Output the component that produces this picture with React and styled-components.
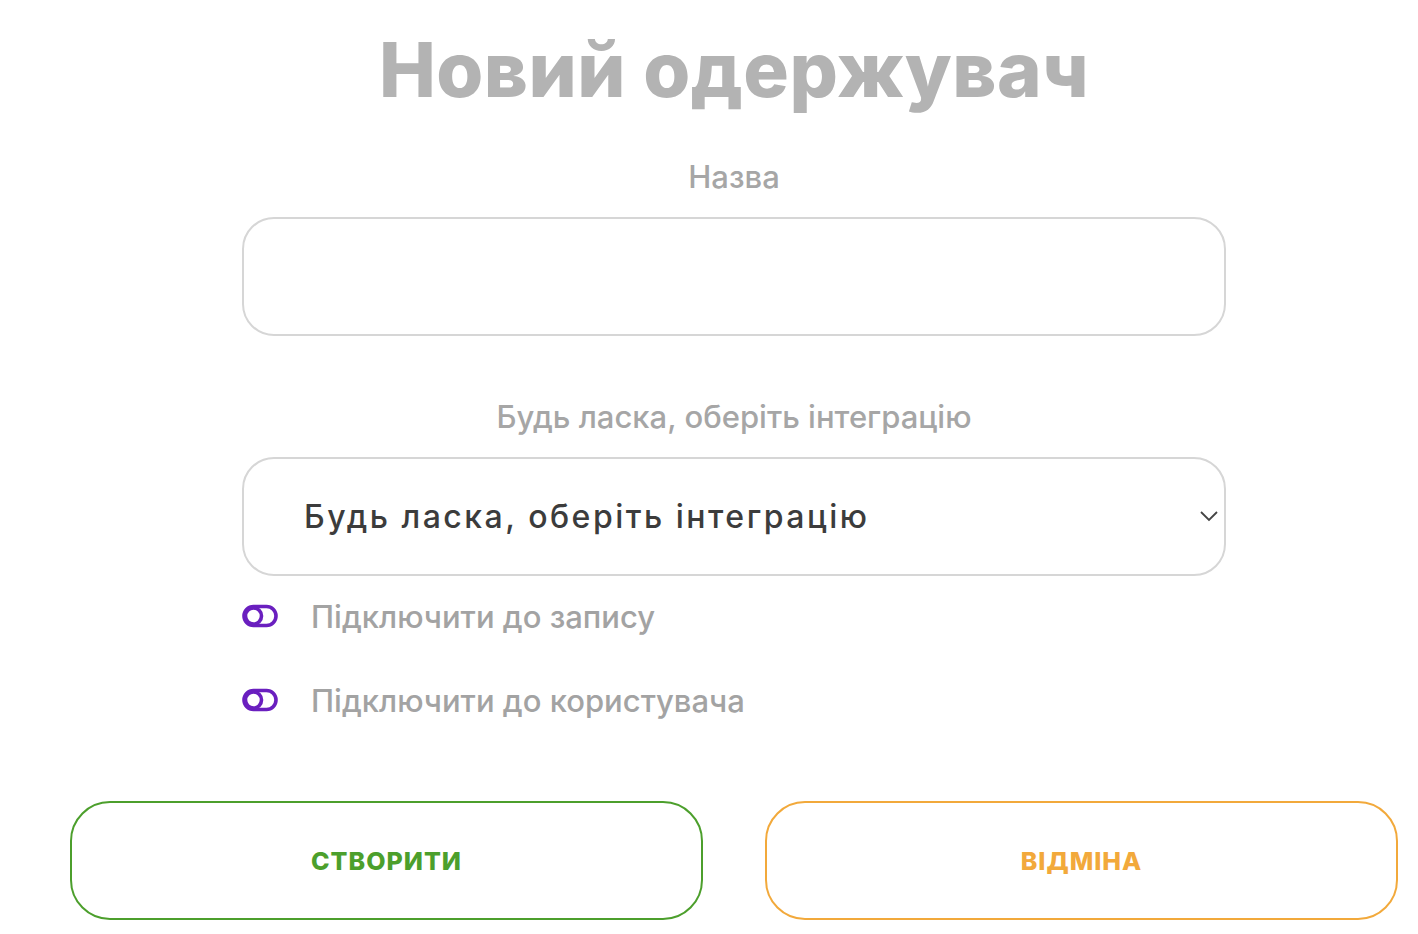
import React from "react";
import styled, { createGlobalStyle } from "styled-components";

const GlobalStyle = createGlobalStyle`
  body {
    margin: 0;
    background: #fff;
    font-family: Inter, "Noto Sans", sans-serif;
  }
`;

const Page = styled.div`
  width: 1328px;
  margin-left: 70px;
  display: flex;
  flex-direction: column;
  align-items: center;
`;

const Title = styled.h1`
  margin: 31px 0 0;
  font-size: 76px;
  line-height: 1;
  font-weight: 800;
  color: #b3b3b3;
  letter-spacing: 0.5px;
`;

const Form = styled.form`
  width: 984px;
  display: flex;
  flex-direction: column;
  margin-top: 53px;
`;

const Label = styled.label`
  align-self: center;
  font-size: 31px;
  line-height: 34px;
  font-weight: 500;
  color: #a6a6a6;
  margin-top: ${(p) => (p.first ? "0" : "64px")};
`;

const fieldBox = `
  box-sizing: border-box;
  width: 100%;
  height: 119px;
  margin-top: 23px;
  border: 2px solid #d6d6d6;
  border-radius: 32px;
  background: #fff;
  outline: none;
`;

const Input = styled.input`
  ${fieldBox}
  padding: 0 60px;
  font-family: Inter, "Noto Sans", sans-serif;
  font-size: 30px;
`;

const SelectWrap = styled.div`
  position: relative;
`;

const Select = styled.select`
  ${fieldBox}
  appearance: none;
  padding: 0 60px;
  font-family: Inter, "Noto Sans", sans-serif;
  font-size: 32px;
  font-weight: 500;
  color: #3c3c3c;
  letter-spacing: 2.5px;
`;

const Chevron = styled.svg`
  position: absolute;
  right: 7px;
  top: 50%;
  margin-top: 11px;
  transform: translateY(-50%);
  pointer-events: none;
`;

const ToggleRow = styled.label`
  display: flex;
  align-items: center;
  gap: 33px;
  height: 36px;
  margin-top: ${(p) => (p.first ? "22px" : "48px")};
  font-size: 31px;
  font-weight: 500;
  color: #a3a3a3;
  cursor: pointer;
`;

const Buttons = styled.div`
  width: 100%;
  display: flex;
  gap: 62px;
  margin-top: 83px;
`;

const Button = styled.button`
  flex: 1;
  height: 119px;
  border: 2px solid ${(p) => p.color};
  border-radius: 40px;
  background: #fff;
  color: ${(p) => p.color};
  font-family: Inter, "Noto Sans", sans-serif;
  font-size: 25px;
  font-weight: 800;
  text-transform: uppercase;
  letter-spacing: 1px;
  cursor: pointer;
`;

const ToggleIcon = () => (
  <svg width="36" height="24" viewBox="0 0 36 24">
    <rect x="2" y="2.5" width="32" height="19" rx="9.5" fill="none" stroke="#6a1fbf" strokeWidth="3.6" />
    <circle cx="11.5" cy="12" r="8" fill="none" stroke="#6a1fbf" strokeWidth="3.6" />
  </svg>
);

export default function App() {
  return (
    <>
      <GlobalStyle />
      <Page>
        <Title>Новий одержувач</Title>
        <Form onSubmit={(e) => e.preventDefault()}>
          <Label first htmlFor="name">Назва</Label>
          <Input id="name" name="name" />
          <Label htmlFor="integration">Будь ласка, оберіть інтеграцію</Label>
          <SelectWrap>
            <Select id="integration" defaultValue="">
              <option value="">Будь ласка, оберіть інтеграцію</option>
            </Select>
            <Chevron width="20" height="12" viewBox="0 0 20 12">
              <path d="M2 2l8 8 8-8" fill="none" stroke="#444" strokeWidth="1.8" />
            </Chevron>
          </SelectWrap>
          <ToggleRow first>
            <ToggleIcon />
            Підключити до запису
          </ToggleRow>
          <ToggleRow>
            <ToggleIcon />
            Підключити до користувача
          </ToggleRow>
        </Form>
        <Buttons>
          <Button type="submit" color="#4c9f2c">Створити</Button>
          <Button type="button" color="#f2a93b">Відміна</Button>
        </Buttons>
      </Page>
    </>
  );
}
